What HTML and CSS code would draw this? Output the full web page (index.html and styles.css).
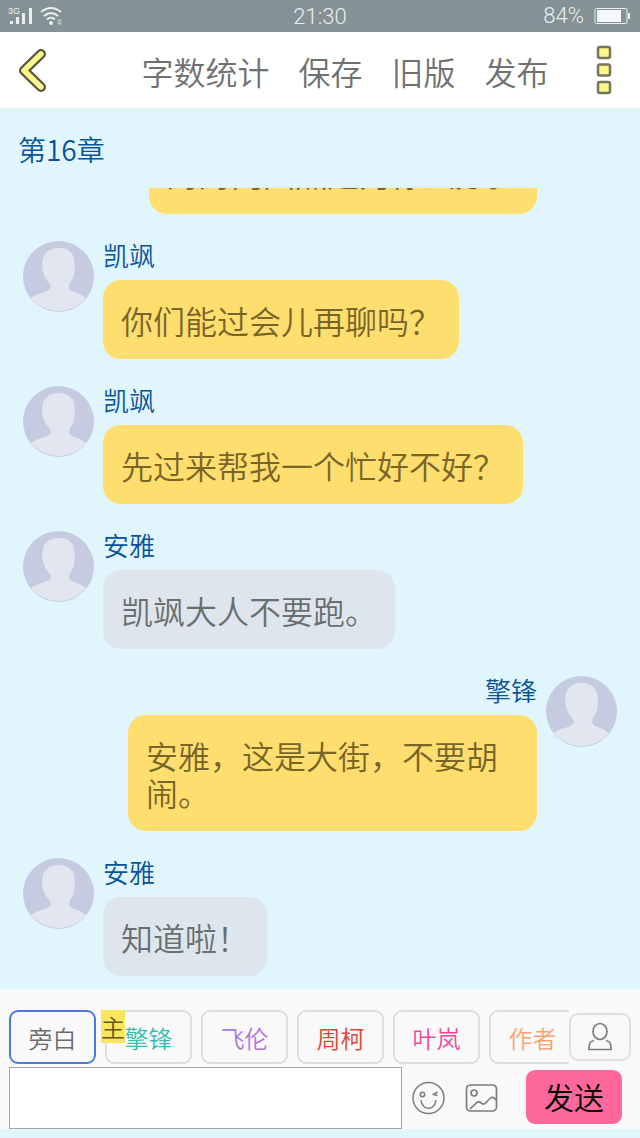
FILE: index.html
```html
<!DOCTYPE html>
<html lang="zh-CN">
<head>
<meta charset="utf-8">
<meta name="viewport" content="width=device-width, initial-scale=1">
<title>第16章</title>
<link rel="stylesheet" href="styles.css">
</head>
<body>
<svg class="defs" aria-hidden="true">
  <symbol id="person" viewBox="0 0 71 71">
    <circle cx="35.5" cy="35.5" r="35.5" fill="#c5cbe0"/>
    <path d="M8 57C13 53 20 52 25 49.500C28 48.500 28 46 27 43C23 39 21.500 36 20.500 32C19 28 19 24 19.500 20C20.500 11 27 7 35.500 7C44 7 51 11 51.500 20C52 25 52 30 51 34C50 38 48 40 46.500 43C46 46 46 48.500 48 49.500C54 52 58 53 63 57A35.500 35.500 0 0 1 8 57Z" fill="#e2e6ef"/>
  </symbol>
</svg>
<div class="app">
  <div class="status">
    <div class="status-side">
      <svg width="64" height="32" viewBox="0 0 64 32" aria-hidden="true">
        <text class="network" x="8" y="14">3G</text>
        <path d="M10 21h3v3h-3zM16 17h3v7h-3zM22 13h3v11h-3zM29 8h3v16h-3z" fill="#e8f0f1"/>
        <path d="M41 12Q51 4 61 12M44 16Q51 10 58 16M47 19.500Q51 16 55 19.500" fill="none" stroke="#e8f0f1" stroke-width="2"/>
        <circle cx="51" cy="23" r="2" fill="#e8f0f1"/>
        <path d="M57 21.500L59.500 18.500L62 21.500ZM57 22.500L59.500 25.500L62 22.500Z" fill="#bcc8ca"/>
      </svg>
    </div>
    <span>21:30</span>
    <div class="status-side status-right">
      <span>84%</span>
      <svg width="36" height="16" viewBox="0 0 36 16" aria-hidden="true">
        <rect x="1" y=".5" width="32" height="15" rx="1.500" fill="none" stroke="#e8f0f1"/>
        <rect x="3" y="2" width="24" height="12" fill="#f4f7f7"/>
        <path d="M34 5h2v6h-2z" fill="#e8f0f1"/>
      </svg>
    </div>
  </div>
  <header class="bar">
    <button class="icon-button" aria-label="返回">
      <svg width="32" height="48" viewBox="0 0 32 48" aria-hidden="true">
        <path d="M25 8L8 24.500L25 41" fill="none" stroke="#57533f" stroke-width="10" stroke-linecap="round" stroke-linejoin="round"/>
        <path d="M25 8L8 24.500L25 41" fill="none" stroke="#fbf78a" stroke-width="5.500" stroke-linecap="round" stroke-linejoin="round"/>
      </svg>
    </button>
    <nav class="actions">
      <button>字数统计</button>
      <button>保存</button>
      <button>旧版</button>
      <button>发布</button>
    </nav>
    <button class="icon-button" aria-label="更多">
      <svg width="16" height="50" viewBox="0 0 16 50" aria-hidden="true">
        <g fill="#fbf78a" stroke="#77735d" stroke-width="2.500">
          <rect x="2" y="2" width="12" height="11" rx="2"/>
          <rect x="2" y="19.500" width="12" height="11" rx="2"/>
          <rect x="2" y="37" width="12" height="11" rx="2"/>
        </g>
      </svg>
    </button>
  </header>
  <h1 class="chapter">第16章</h1>
  <main class="chat">
    <div class="message own cut">
      <div class="body"><p class="bubble">对对内回然是为你么办。</p></div>
    </div>
    <div class="message">
      <svg class="avatar"><use href="#person"/></svg>
      <div class="body"><span class="name">凯飒</span><p class="bubble">你们能过会儿再聊吗？</p></div>
    </div>
    <div class="message">
      <svg class="avatar"><use href="#person"/></svg>
      <div class="body"><span class="name">凯飒</span><p class="bubble">先过来帮我一个忙好不好？</p></div>
    </div>
    <div class="message">
      <svg class="avatar"><use href="#person"/></svg>
      <div class="body"><span class="name">安雅</span><p class="bubble grey">凯飒大人不要跑。</p></div>
    </div>
    <div class="message own">
      <svg class="avatar"><use href="#person"/></svg>
      <div class="body"><span class="name">擎锋</span><p class="bubble">安雅，这是大街，不要胡闹。</p></div>
    </div>
    <div class="message">
      <svg class="avatar"><use href="#person"/></svg>
      <div class="body"><span class="name">安雅</span><p class="bubble grey">知道啦！</p></div>
    </div>
  </main>
  <footer class="composer">
    <div class="cast">
      <div class="roles">
        <button class="role selected">旁白</button>
        <button class="role teal"><span class="lead">主</span>擎锋</button>
        <button class="role purple">飞伦</button>
        <button class="role red">周柯</button>
        <button class="role pink">叶岚</button>
        <button class="role orange">作者</button>
      </div>
      <button class="add-role" aria-label="角色">
        <svg width="26" height="30" viewBox="0 0 26 30" fill="none" stroke="#7d7d7d" stroke-width="1.700" aria-hidden="true">
          <ellipse cx="13" cy="9.500" rx="7" ry="8"/>
          <path d="M7 18.500C3 19.500 2 21 2 27.500H24C24 21 23 19.500 19 18.500"/>
        </svg>
      </button>
    </div>
    <div class="entry">
      <textarea class="text" aria-label="消息"></textarea>
      <div class="tools">
        <button class="icon-button" aria-label="表情">
          <svg width="34" height="34" viewBox="0 0 34 34" fill="none" stroke="#7d7d7d" stroke-width="1.500" aria-hidden="true">
            <circle cx="16.500" cy="17" r="15.500"/>
            <circle cx="10.500" cy="13.500" r="2.200"/>
            <path d="M25.500 11L21.500 13.500L25.500 14.500M9 19C10 30 23 30 24 19"/>
          </svg>
        </button>
        <button class="icon-button" aria-label="图片">
          <svg width="34" height="34" viewBox="0 0 34 34" fill="none" stroke="#7d7d7d" stroke-width="1.700" aria-hidden="true">
            <rect x="1.500" y="4" width="30" height="26" rx="4"/>
            <circle cx="9" cy="12" r="3"/>
            <path d="M5 28L12 21.500Q14 20 16 22L18 23Q20 23.500 22 20.500L25 17.500Q27 15.500 29 17L31.500 19"/>
          </svg>
        </button>
      </div>
      <button class="send">发送</button>
    </div>
  </footer>
</div>
</body>
</html>
```
FILE: styles.css
```css
* { box-sizing: border-box; }
body {
  margin: 0;
  background: #e0f5fc;
  font-family: "Noto Sans CJK SC", sans-serif;
  font-weight: 350;
}
button {
  margin: 0;
  padding: 0;
  border: 0;
  background: none;
  color: inherit;
  font: inherit;
}
svg { display: block; flex: none; }
.defs { position: absolute; width: 0; height: 0; }
.app {
  display: flex;
  flex-direction: column;
  height: 100vh;
  padding-bottom: 9px;
}
.status {
  display: grid;
  grid-template-columns: 1fr auto 1fr;
  align-items: center;
  height: 32px;
  background: #859295;
  color: #e8f0f1;
  font: 22px/30px Roboto, sans-serif;
  font-weight: 300;
}
.status > span { padding-top: 2px; }
.status-right {
  display: flex;
  align-items: center;
  justify-content: flex-end;
  gap: 10px;
  padding-right: 10px;
}
.network { font: 500 9px "Liberation Sans", sans-serif; fill: #e8f0f1; }
.bar {
  display: flex;
  align-items: center;
  justify-content: space-between;
  height: 77px;
  padding: 0 28px 0 16px;
  border-bottom: 1px solid #eaf0f3;
  background: #fff;
}
.actions {
  display: flex;
  gap: 29px;
  margin-left: 46px;
  padding-top: 2px;
  color: #707070;
  font-size: 32px;
  line-height: 40px;
}
.chapter {
  flex: none;
  margin: 0;
  padding: 21px 18px 19px;
  border-bottom: 1px solid #dceff6;
  color: #07549a;
  font-size: 28px;
  font-weight: 350;
  line-height: 38px;
}
.chat {
  display: flex;
  flex: 1;
  flex-direction: column;
  justify-content: flex-end;
  gap: 27px;
  min-height: 0;
  padding: 0 23px 13px;
  overflow: hidden;
}
.message { display: flex; flex: none; gap: 9px; }
.own { flex-direction: row-reverse; }
.avatar { width: 71px; height: 71px; }
.body {
  display: flex;
  flex-direction: column;
  align-items: flex-start;
  max-width: 75%;
}
.own .body { align-items: flex-end; max-width: 409px; }
.name {
  margin-bottom: 11px;
  color: #07549a;
  font-size: 26px;
  line-height: 28px;
}
.bubble {
  margin: 0;
  padding: 22px 18px 20px;
  border-radius: 18px;
  background: #ffde70;
  color: #796528;
  font-size: 32px;
  line-height: 37px;
}
.grey { background: #dee5ed; color: #68706f; }
.cut { padding-right: 80px; }
.cut .bubble { padding: 20px 18px 22px; }
.composer {
  flex: none;
  padding: 21px 9px 0;
  background: #f9f9f9;
}
.cast { display: flex; align-items: center; }
.roles { display: flex; flex: 1; gap: 9px; min-width: 0; overflow: hidden; }
.role {
  position: relative;
  flex: none;
  width: 87px;
  height: 54px;
  border: 2px solid #dedede;
  border-radius: 9px;
  font-size: 24px;
}
.selected { border-color: #4d7bdd; color: #6b6b6b; }
.teal { color: #36bdb0; }
.purple { color: #ae76dc; }
.red { color: #de4638; }
.pink { color: #ec4a98; }
.orange { color: #f5a574; }
.lead {
  position: absolute;
  top: -2px;
  left: -6px;
  width: 24px;
  background: #f8e75c;
  color: #5f5a23;
  line-height: 33px;
}
.add-role {
  display: grid;
  place-items: center;
  width: 62px;
  height: 48px;
  border: 2px solid #e3dfe0;
  border-radius: 9px;
}
.entry { display: flex; align-items: center; padding-top: 3px; }
.text {
  flex: 1;
  min-width: 0;
  height: 62px;
  padding: 8px;
  border: 1px solid #a5a5a5;
  background: #fff;
  font: inherit;
  font-size: 24px;
  resize: none;
}
.tools { display: flex; gap: 19px; padding: 0 27px 0 10px; }
.send {
  width: 96px;
  height: 54px;
  margin: 0 9px 2px 0;
  padding-bottom: 2px;
  border-radius: 9px;
  background: #ff689d;
  color: #000;
  font-size: 30px;
}
```
